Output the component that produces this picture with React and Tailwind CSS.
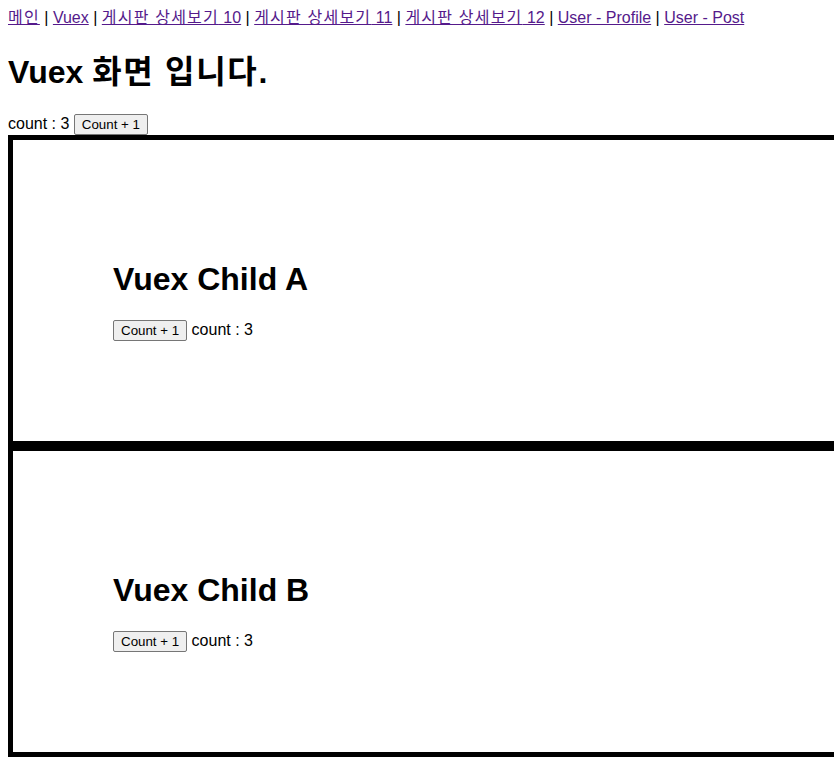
const LINKS = [
  { ko: "메인", rest: "" },
  { ko: "", rest: "Vuex" },
  { ko: "게시판 상세보기", rest: " 10" },
  { ko: "게시판 상세보기", rest: " 11" },
  { ko: "게시판 상세보기", rest: " 12" },
  { ko: "", rest: "User - Profile" },
  { ko: "", rest: "User - Post" },
];

const FONT = { fontFamily: '"Liberation Sans", Arial, "Noto Sans CJK KR", sans-serif' };

function CountButton() {
  return (
    <button
      type="button"
      className="inline-block align-baseline h-[21px] px-[7px] text-[13.33px] leading-[15px] text-black bg-[#efefef] border border-[#767676] rounded-[2px]"
    >
      Count + 1
    </button>
  );
}

function ChildBox({ name }) {
  return (
    <div className="w-full shrink-0 box-content border-[5px] border-black px-[100px] pt-[100px] pb-[100px]">
      <h1 className="mt-[21px] mb-[22px] text-[32px] leading-[37px] font-bold text-black">
        Vuex Child {name}
      </h1>
      <div className="leading-[18px] text-[16px] text-black whitespace-nowrap">
        <CountButton /> count : 3
      </div>
    </div>
  );
}

export default function App() {
  return (
    <div className="w-[834px] h-[781px] overflow-hidden bg-white text-black" style={FONT}>
      <div className="p-2 w-[818px]">
        {/* nav */}
        <div className="text-[16px] leading-[19px] whitespace-nowrap">
          {LINKS.map((link, i) => (
            <span key={i}>
              {i > 0 && " | "}
              <a href="#" className="text-[#551a8b] underline">
                {link.ko && <span className="tracking-[1.2px]">{link.ko}</span>}
                {link.rest}
              </a>
            </span>
          ))}
        </div>

        <h1 className="mt-[27px] mb-[23px] text-[32px] leading-[37px] font-bold whitespace-nowrap">
          Vuex <span className="tracking-[1.7px]">화면 입니다</span>.
        </h1>

        <div className="text-[16px] leading-[18px] whitespace-nowrap">
          count : 3 <CountButton />
        </div>

        <div className="flex flex-col">
          <ChildBox name="A" />
          <ChildBox name="B" />
        </div>
      </div>
    </div>
  );
}
